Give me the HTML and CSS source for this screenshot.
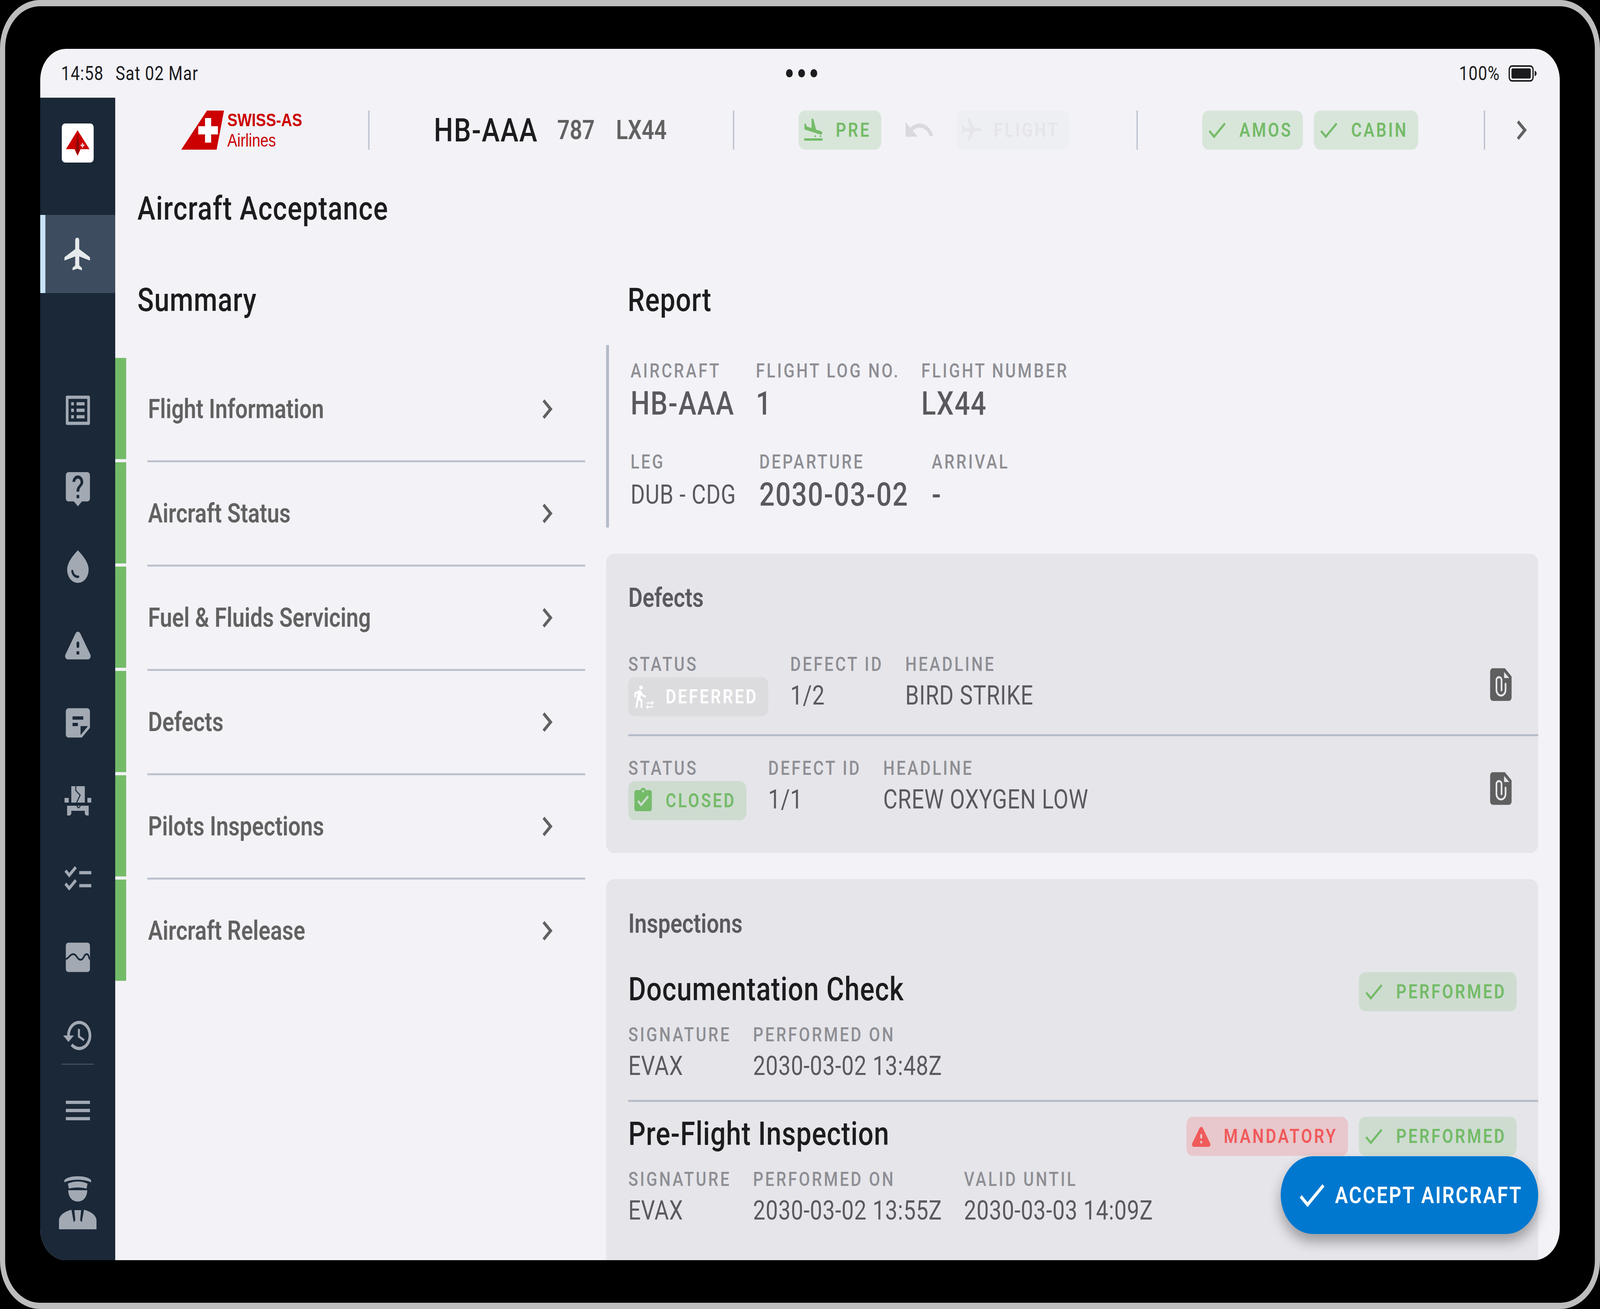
FILE: index.html
```html
<!DOCTYPE html>
<html lang="en">
<head>
<meta charset="utf-8">
<title>Aircraft Acceptance</title>
<link rel="stylesheet" href="styles.css">
</head>
<body>
<div class="device">
<div class="screen">
  <div class="statusbar">
    <div class="clock"><span class="time">14:58</span><span>Sat 02 Mar</span></div>
    <div class="dots"><i></i><i></i><i></i></div>
    <div class="power"><span>100%</span>
      <svg class="battery" viewBox="0 0 88 42"><rect x="2" y="2" width="74" height="38" rx="9" fill="none" stroke="#1c1c1e" stroke-width="4"/><rect x="9" y="8" width="60" height="26" rx="4" fill="#1c1c1e"/><path d="M81 14c4 1 6 4 6 7s-2 6-6 7z" fill="#1c1c1e"/></svg>
    </div>
  </div>
  <div class="app">
    <nav class="sidebar">
      <div class="tile"><svg viewBox="0 0 100 100"><path d="M49.500 17 87 66H59l-9.500 17L40 66H13z" fill="#cc0000"/><path d="M49.500 24 54 50v21l-4.500 10-4.500-10V50z" fill="#8c0a0a"/><path d="M63 50h4v4h4v4h-4v4h-4v-4h-4v-4h4z" fill="#f3c9c9"/></svg></div>
      <div class="nav-active"><svg class="ico plane" viewBox="0 0 24 24"><path d="M21 16v-2l-8-5V3.500c0-.83-.67-1.500-1.500-1.500S10 2.670 10 3.500V9l-8 5v2l8-2.500V19l-2 1.500V22l3.500-1 3.500 1v-1.500L13 19v-5.500l8 2.500z"/></svg></div>
      <div class="nav-list">
        <svg class="ico" viewBox="0 0 24 24"><path d="M19 5v14H5V5h14m1.100-2H3.900c-.5 0-.9.4-.9.9v16.200c0 .4.4.9.9.9h16.200c.4 0 .9-.5.9-.9V3.900c0-.5-.5-.9-.9-.9zM11 7h6v2h-6V7zm0 4h6v2h-6v-2zm0 4h6v2h-6zM7 7h2v2H7zm0 4h2v2H7zm0 4h2v2H7z"/></svg>
        <svg class="ico" viewBox="0 0 24 24"><path d="M19 2H5c-1.110 0-2 .9-2 2v14c0 1.100.89 2 2 2h4l3 3 3-3h4c1.100 0 2-.9 2-2V4c0-1.100-.9-2-2-2zm-6 16h-2v-2h2v2zm2.070-7.750l-.9.92C13.450 11.900 13 12.500 13 14h-2v-.5c0-1.100.45-2.100 1.170-2.830l1.240-1.260c.37-.36.59-.86.59-1.410 0-1.100-.9-2-2-2s-2 .9-2 2H8c0-2.210 1.790-4 4-4s4 1.790 4 4c0 .88-.36 1.680-.93 2.250z"/></svg>
        <svg class="ico" viewBox="0 0 24 24"><path d="M12 2c-5.330 4.550-8 8.480-8 11.800 0 4.980 3.800 8.200 8 8.200s8-3.220 8-8.200c0-3.320-2.670-7.250-8-11.800zM7.830 14c.37 0 .67.26.74.62.41 2.220 2.280 2.980 3.640 2.870.43-.02.79.32.79.75 0 .4-.32.73-.72.75-2.130.13-4.620-1.090-5.190-4.120-.08-.45.28-.87.74-.87z"/></svg>
        <svg class="ico" viewBox="0 0 24 24"><path d="M4.470 21h15.060c1.540 0 2.500-1.670 1.730-3L13.730 4.990c-.77-1.330-2.690-1.330-3.460 0L2.740 18c-.77 1.330.19 3 1.730 3zM12 14c-.55 0-1-.45-1-1v-2c0-.55.45-1 1-1s1 .45 1 1v2c0 .55-.45 1-1 1zm1 4h-2v-2h2v2z"/></svg>
        <svg class="ico" viewBox="0 0 24 24"><path d="M19 3H4.990C3.890 3 3 3.900 3 5l.01 14c0 1.100.89 2 1.990 2h10l6-6V5c0-1.100-.9-2-2-2zM8 8h8v2H8V8zm4 6H8v-2h4v2zm2 5.500V14h5.500L14 19.500z"/></svg>
        <svg class="ico" viewBox="0 0 100 100"><path d="M29.500 12h42v42h-42zM8.500 42h13v12h-13zM79.500 42h12v12h-12zM16.500 62h67v25h-8l-4-4V75h-42v8l-4 4h-9z"/><path d="M43.500 12v11L57 35 46 54M46 62l6 6M58 62l-6 6" fill="none" stroke="#1a2838" stroke-width="3"/></svg>
        <svg class="ico" viewBox="0 0 24 24"><path d="M22 7h-9v2h9V7zm0 8h-9v2h9v-2zM5.540 11L2 7.460l1.410-1.410 2.120 2.120 4.240-4.240 1.410 1.410L5.540 11zm0 8L2 15.460l1.410-1.410 2.120 2.120 4.240-4.240 1.410 1.410L5.540 19z"/></svg>
        <svg class="ico" viewBox="0 0 24 24"><rect x="3" y="3" width="18" height="18" rx="1.800"/><path d="M3 13C5 13 6 10 8.500 10S11.500 13.500 14 13.500 16.500 10 18.500 10 20 13 21 13" fill="none" stroke="#1a2838" stroke-width="1.100"/></svg>
        <svg class="ico" viewBox="0 0 24 24"><path d="M13 3c-4.970 0-9 4.030-9 9H1l3.890 3.890.07.14L9 12H6c0-3.870 3.130-7 7-7s7 3.130 7 7-3.130 7-7 7c-1.930 0-3.680-.79-4.940-2.060l-1.420 1.420C8.270 19.990 10.510 21 13 21c4.970 0 9-4.030 9-9s-4.030-9-9-9zm-1 5v5l4.280 2.540.72-1.210-3.500-2.080V8H12z"/></svg>
      </div>
      <div class="nav-rule"></div>
      <svg class="ico menu" viewBox="0 0 24 24"><path d="M3 18h18v-2H3v2zm0-5h18v-2H3v2zm0-7v2h18V6H3z"/></svg>
      <svg class="ico pilot" viewBox="0 0 117 141"><path d="M17 15C30 2 87 2 100 15v6C80 12 37 12 17 21z"/><path d="M28 24c20-7 41-7 61 0l-3 13c-17-4-38-4-55 0z"/><path d="M29 41h59c0 17-12 29-29.500 29S29 58 29 41z"/><path d="M0 141v-21c0-16 20-25 39-29l7 32 5-5-3-26h21l-3 26 5 5 7-32c19 4 39 13 39 29v21z"/></svg>
    </nav>
    <main class="main">
      <header class="topbar">
        <div class="seg seg-logo">
          <div class="logo">
            <svg class="tail" viewBox="0 0 133 100"><path d="M80 0h53l-23 100H0z" fill="#cc0000"/><path d="M74 19h19v21h21v21H93v21H74V61H53V40h21z" fill="#fff"/></svg>
            <div class="wordmark"><b>SWISS-AS</b><span>Airlines</span></div>
          </div>
        </div>
        <div class="seg seg-flight">
          <span class="tail-no">HB-AAA</span><span class="sub sub-a">787</span><span class="sub sub-b">LX44</span>
        </div>
        <div class="seg seg-phase">
          <div class="chip ok"><svg class="chip-ico" viewBox="0 0 24 24"><path d="M2.500 19h19v2h-19v-2zm7.180-5.730l4.350 1.160 5.310 1.420c.8.21 1.620-.26 1.840-1.060.21-.8-.26-1.620-1.060-1.840l-5.310-1.420-2.760-9.020L10.120 2v8.280L5.150 8.950l-.93-2.320-1.450-.39v5.170l1.600.43 5.310 1.430z"/><circle cx="14" cy="17.200" r=".8"/><circle cx="19.400" cy="17.200" r=".8"/></svg><span>PRE</span></div>
          <svg class="ico undo" viewBox="0 0 24 24"><path d="M12.500 8c-2.650 0-5.050.99-6.900 2.600L2 7v9h9l-3.620-3.620c1.390-1.160 3.160-1.880 5.120-1.880 3.540 0 6.550 2.310 7.600 5.500l2.370-.78C21.080 11.030 17.150 8 12.500 8z"/></svg>
          <div class="chip off"><svg class="chip-ico" viewBox="0 0 24 24"><path transform="rotate(90 12 12)" d="M21 16v-2l-8-5V3.500c0-.83-.67-1.500-1.500-1.500S10 2.670 10 3.500V9l-8 5v2l8-2.500V19l-2 1.500V22l3.500-1 3.500 1v-1.500L13 19v-5.500l8 2.500z"/></svg><span>FLIGHT</span></div>
        </div>
        <div class="seg seg-checks">
          <div class="chip ok"><svg class="chip-ico" viewBox="0 0 24 24"><path d="M9 16.170L4.830 12l-1.420 1.410L9 19 21 7l-1.410-1.410z"/></svg><span>AMOS</span></div>
          <div class="chip ok"><svg class="chip-ico" viewBox="0 0 24 24"><path d="M9 16.170L4.830 12l-1.420 1.410L9 19 21 7l-1.410-1.410z"/></svg><span>CABIN</span></div>
        </div>
        <div class="seg seg-more"><svg class="ico chev" viewBox="0 0 24 24"><path d="M10 6L8.590 7.410 13.170 12l-4.580 4.590L10 18l6-6z"/></svg></div>
      </header>

      <h1 class="title">Aircraft Acceptance</h1>

      <div class="columns">
        <section class="col-left">
          <h2 class="col-head">Summary</h2>
          <ul class="steps">
            <li class="step"><span class="bar"></span><div class="step-body"><span>Flight Information</span><svg class="ico chev" viewBox="0 0 24 24"><path d="M10 6L8.590 7.410 13.170 12l-4.580 4.590L10 18l6-6z"/></svg></div></li>
            <li class="step"><span class="bar"></span><div class="step-body"><span>Aircraft Status</span><svg class="ico chev" viewBox="0 0 24 24"><path d="M10 6L8.590 7.410 13.170 12l-4.580 4.590L10 18l6-6z"/></svg></div></li>
            <li class="step"><span class="bar"></span><div class="step-body"><span>Fuel &amp; Fluids Servicing</span><svg class="ico chev" viewBox="0 0 24 24"><path d="M10 6L8.590 7.410 13.170 12l-4.580 4.590L10 18l6-6z"/></svg></div></li>
            <li class="step"><span class="bar"></span><div class="step-body"><span>Defects</span><svg class="ico chev" viewBox="0 0 24 24"><path d="M10 6L8.590 7.410 13.170 12l-4.580 4.590L10 18l6-6z"/></svg></div></li>
            <li class="step"><span class="bar"></span><div class="step-body"><span>Pilots Inspections</span><svg class="ico chev" viewBox="0 0 24 24"><path d="M10 6L8.590 7.410 13.170 12l-4.580 4.590L10 18l6-6z"/></svg></div></li>
            <li class="step last"><span class="bar"></span><div class="step-body"><span>Aircraft Release</span><svg class="ico chev" viewBox="0 0 24 24"><path d="M10 6L8.590 7.410 13.170 12l-4.580 4.590L10 18l6-6z"/></svg></div></li>
          </ul>
        </section>

        <section class="col-right">
          <h2 class="col-head report-head">Report</h2>
          <div class="report">
            <div class="fields">
              <div class="field"><span class="label">AIRCRAFT</span><span class="big">HB-AAA</span></div>
              <div class="field"><span class="label">FLIGHT LOG NO.</span><span class="big">1</span></div>
              <div class="field"><span class="label">FLIGHT NUMBER</span><span class="big">LX44</span></div>
            </div>
            <div class="fields fields-leg">
              <div class="field"><span class="label">LEG</span><span class="reg">DUB - CDG</span></div>
              <div class="field"><span class="label">DEPARTURE</span><span class="big">2030-03-02</span></div>
              <div class="field"><span class="label">ARRIVAL</span><span class="big">-</span></div>
            </div>
          </div>

          <div class="card defects">
            <h3 class="card-title">Defects</h3>
            <div class="defect rule">
              <div class="cell"><span class="label">STATUS</span>
                <div class="chip muted"><svg class="chip-ico" viewBox="0 0 24 24"><g transform="translate(-2.300 1) scale(.9)"><path d="M13.500 5.500c1.100 0 2-.9 2-2s-.9-2-2-2-2 .9-2 2 .9 2 2 2zM9.800 8.900L7 23h2.100l1.800-8 2.100 2v6h2v-7.500l-2.100-2 .6-3C14.800 12 16.800 13 19 13v-2c-1.900 0-3.500-1-4.300-2.400l-1-1.600c-.4-.6-1-1-1.700-1-.3 0-.5.1-.8.1L6 8.300V13h2V9.600l1.800-.7"/></g><path d="M15.500 17.300h7M20.800 15.700l1.700 1.600-1.700 1.600M22.500 20.700h-7M17.200 19.100l-1.700 1.600 1.700 1.600" fill="none" stroke="currentColor" stroke-width=".9"/></svg><span>DEFERRED</span></div>
              </div>
              <div class="cell"><span class="label">DEFECT ID</span><span class="reg">1/2</span></div>
              <div class="cell"><span class="label">HEADLINE</span><span class="reg">BIRD STRIKE</span></div>
              <svg class="ico clip" viewBox="0 0 24 24"><path d="M6 2h9l5 5v13a2 2 0 0 1-2 2H6a2 2 0 0 1-2-2V4a2 2 0 0 1 2-2z"/><path d="M14.400 4.200V8h3.800z" fill="#e5e5ea"/><path d="M15.500 11.500v3.800a3.400 3.400 0 0 1-6.800 0V9.300a1.900 1.900 0 0 1 3.800 0v6.200" fill="none" stroke="#e5e5ea" stroke-width="1.250" stroke-linecap="round"/></svg>
            </div>
            <div class="defect">
              <div class="cell"><span class="label">STATUS</span>
                <div class="chip ok"><svg class="chip-ico" viewBox="0 0 24 24"><path d="M19 3h-4.180C14.400 1.840 13.300 1 12 1c-1.300 0-2.400.84-2.820 2H5c-1.100 0-2 .9-2 2v14c0 1.100.9 2 2 2h14c1.100 0 2-.9 2-2V5c0-1.100-.9-2-2-2zm-7 0c.55 0 1 .45 1 1s-.45 1-1 1-1-.45-1-1 .45-1 1-1zm-2 14l-4-4 1.410-1.410L10 14.170l6.590-6.590L18 9l-8 8z"/></svg><span>CLOSED</span></div>
              </div>
              <div class="cell"><span class="label">DEFECT ID</span><span class="reg">1/1</span></div>
              <div class="cell"><span class="label">HEADLINE</span><span class="reg">CREW OXYGEN LOW</span></div>
              <svg class="ico clip" viewBox="0 0 24 24"><path d="M6 2h9l5 5v13a2 2 0 0 1-2 2H6a2 2 0 0 1-2-2V4a2 2 0 0 1 2-2z"/><path d="M14.400 4.200V8h3.800z" fill="#e5e5ea"/><path d="M15.500 11.500v3.800a3.400 3.400 0 0 1-6.800 0V9.300a1.900 1.900 0 0 1 3.800 0v6.200" fill="none" stroke="#e5e5ea" stroke-width="1.250" stroke-linecap="round"/></svg>
            </div>
          </div>

          <div class="card inspections">
            <h3 class="card-title">Inspections</h3>
            <div class="inspection rule">
              <div class="ins-head"><span class="ins-name">Documentation Check</span>
                <div class="chip ok"><svg class="chip-ico" viewBox="0 0 24 24"><path d="M9 16.170L4.830 12l-1.420 1.410L9 19 21 7l-1.410-1.410z"/></svg><span>PERFORMED</span></div>
              </div>
              <div class="ins-fields">
                <div class="cell"><span class="label">SIGNATURE</span><span class="reg">EVAX</span></div>
                <div class="cell"><span class="label">PERFORMED ON</span><span class="reg">2030-03-02 13:48Z</span></div>
              </div>
            </div>
            <div class="inspection">
              <div class="ins-head"><span class="ins-name">Pre-Flight Inspection</span>
                <div class="chip alert"><svg class="chip-ico" viewBox="0 0 24 24"><path d="M4.470 21h15.060c1.540 0 2.500-1.670 1.730-3L13.730 4.990c-.77-1.330-2.690-1.330-3.460 0L2.740 18c-.77 1.330.19 3 1.730 3zM12 14c-.55 0-1-.45-1-1v-2c0-.55.45-1 1-1s1 .45 1 1v2c0 .55-.45 1-1 1zm1 4h-2v-2h2v2z"/></svg><span>MANDATORY</span></div>
                <div class="chip ok"><svg class="chip-ico" viewBox="0 0 24 24"><path d="M9 16.170L4.830 12l-1.420 1.410L9 19 21 7l-1.410-1.410z"/></svg><span>PERFORMED</span></div>
              </div>
              <div class="ins-fields">
                <div class="cell"><span class="label">SIGNATURE</span><span class="reg">EVAX</span></div>
                <div class="cell"><span class="label">PERFORMED ON</span><span class="reg">2030-03-02 13:55Z</span></div>
                <div class="cell"><span class="label">VALID UNTIL</span><span class="reg">2030-03-03 14:09Z</span></div>
              </div>
            </div>
          </div>
        </section>
      </div>
    </main>
  </div>
  <button class="fab"><svg viewBox="0 0 24 24"><path d="M9 16.170L4.830 12l-1.420 1.410L9 19 21 7l-1.410-1.410z"/></svg><span>ACCEPT AIRCRAFT</span></button>
</div>
</div>
<script src="fit.js"></script>
</body>
</html>
```
FILE: styles.css
```css
* { box-sizing: border-box; }
html, body { margin: 0; padding: 0; background: #000; }
html { width: 100%; height: 100%; overflow: hidden; }
body { width: 100%; height: 3350px; overflow: hidden; font-family: Roboto, "Noto Sans", sans-serif; }
h1, h2, h3, ul { margin: 0; padding: 0; font-weight: 500; list-style: none; }

.device { width: 4971px; height: 3350px; background: #000; border: 16px solid #bdbdbd; border-radius: 124px; padding: 109px; transform: scaleX(var(--fit, 1)); transform-origin: 0 0; }
.screen { position: relative; width: 4721px; height: 3100px; background: #f2f2f7; border-radius: 80px; overflow: hidden; display: flex; flex-direction: column; }

/* status bar */
.statusbar { flex: 0 0 125px; display: flex; align-items: center; padding: 0 71px 0 65px; color: #1c1c1e; font-size: 50px; letter-spacing: 1.500px; }
.clock { flex: 0 0 2252px; display: flex; gap: 37px; }
.dots { display: flex; gap: 17px; }
.dots i { width: 21px; height: 21px; border-radius: 50%; background: #1c1c1e; }
.power { margin-left: auto; display: flex; align-items: center; gap: 27px; }
.battery { width: 88px; height: 42px; }

.app { flex: 1; display: flex; min-height: 0; }

/* sidebar */
.sidebar { flex: 0 0 233px; background: #1a2838; display: flex; flex-direction: column; align-items: center; }
.ico { width: 100px; height: 100px; flex: none; fill: #a2a9b3; display: block; }
.tile { width: 99px; height: 100px; margin-top: 66px; background: #fff; border-radius: 10px; flex: none; }
.tile svg { width: 100%; height: 100%; display: block; }
.nav-active { width: 100%; height: 200px; margin-top: 134px; background: #3d4d5f; border-left: 16px solid #c8e2fb; display: flex; align-items: center; justify-content: center; padding-right: 16px; flex: none; }
.nav-active .plane { fill: #e6e9ec; }
.nav-list { margin-top: 250px; display: flex; flex-direction: column; gap: 100px; flex: none; }
.nav-rule { width: 100px; height: 3px; margin-top: 22px; background: #3d4f63; flex: none; }
.menu { margin-top: 67px; }
.pilot { width: 117px; height: 141px; margin-top: 113px; }

/* main */
.main { flex: 1; min-width: 0; display: flex; flex-direction: column; overflow: hidden; }
.topbar { flex: none; display: flex; height: 133px; padding-top: 33px; }
.seg { height: 100px; display: flex; align-items: center; justify-content: center; border-right: 4px solid #bcc1cd; }
.seg-logo { flex: 0 0 790px; }
.seg-flight { flex: 0 0 1133px; justify-content: flex-start; padding-left: 200px; }
.seg-phase { flex: 0 0 1254px; gap: 67px; padding-right: 8px; }
.seg-checks { flex: 0 0 1079px; gap: 34px; padding-right: 4px; }
.seg-more { flex: 1; border-right: 0; padding-right: 6px; }

.logo { display: flex; align-items: center; gap: 10px; }
.tail { width: 133px; height: 100px; display: block; }
.wordmark { display: flex; flex-direction: column; font-family: "Liberation Sans", Arial, sans-serif; color: #cc0000; line-height: 52px; }
.wordmark b { font-size: 47px; font-weight: 700; }
.wordmark span { font-size: 46px; }

.tail-no { font-size: 84px; font-weight: 500; color: #1c1c1e; letter-spacing: 2.500px; }
.sub { font-size: 68px; font-weight: 600; color: #616161; }
.sub-a { margin-left: 60px; }
.sub-b { margin-left: 66px; }
.undo { fill: #d9d9de; }
.chev { fill: #616161; }

/* chips */
.chip { display: inline-flex; align-items: center; height: 100px; padding: 0 32px 0 10px; gap: 34px; border-radius: 20px; font-size: 50px; font-weight: 600; letter-spacing: 5.800px; white-space: nowrap; flex: none; }
.chip-ico { width: 72px; height: 72px; flex: none; fill: currentColor; display: block; }
.chip.ok { background: rgba(116, 187, 104, .2); color: #74bb68; }
.chip.off { background: #eeeff3; color: #e5e5ea; }
.chip.muted { background: #dcdcdf; color: #fff; }
.chip.alert { background: rgba(245, 85, 85, .2); color: #f05a5b; }

/* title + columns */
.title { margin: 101px 0 0 69px; font-size: 84px; line-height: 100px; color: #1c1c1e; letter-spacing: 1.750px; flex: none; }
.columns { flex: 1; min-height: 0; margin-top: 134px; display: flex; gap: 65px; }
.col-left { flex: 0 0 1460px; }
.col-right { flex: 0 0 2896px; }
.col-head { font-size: 84px; line-height: 100px; color: #1c1c1e; padding-left: 69px; letter-spacing: 1.400px; }
.report-head { padding-left: 67px; }

.steps { margin-top: 98px; }
.step { display: flex; height: 267px; }
.bar { flex: 0 0 34px; height: 259px; background: #74bb68; }
.step-body { flex: 1; margin-left: 66px; padding: 0 68px 0 2px; border-bottom: 5px solid #bcc1cd; display: flex; align-items: center; justify-content: space-between; font-size: 68px; font-weight: 600; color: #616161; }
.step.last .step-body { border-bottom: 0; padding-bottom: 5px; }

/* report */
.report { margin-top: 65px; height: 467px; border-left: 9px solid #b4bbc8; padding: 36px 0 0 67px; display: flex; flex-direction: column; gap: 77px; }
.fields { display: flex; gap: 66px; }
.fields-leg { gap: 72px; }
.field { display: flex; flex-direction: column; gap: 12px; }
.label { display: block; font-size: 50px; line-height: 60px; font-weight: 500; letter-spacing: 5.800px; color: #8e8e93; white-space: nowrap; }
.big { font-size: 84px; line-height: 84px; font-weight: 500; color: #5a5a5e; letter-spacing: 2.500px; white-space: nowrap; }
.reg { display: block; font-size: 68px; line-height: 100px; color: #5a5a5e; letter-spacing: 1px; white-space: nowrap; }
.field .reg { line-height: 84px; }

/* cards */
.card { background: #e5e5ea; border-radius: 24px; }
.card-title { padding-left: 69px; font-size: 68px; line-height: 90px; font-weight: 600; color: #5a5a5e; }
.defects { margin-top: 67px; padding: 68px 0 38px; }
.defects .card-title { margin-bottom: 43px; }
.defect { margin-left: 69px; padding: 52px 66px 46px 0; display: flex; align-items: flex-start; gap: 68px; }
.defect.rule { border-bottom: 5px solid #b4bbc8; }
.cell .chip { margin-top: 3px; }
.clip { margin-left: auto; align-self: center; fill: #5f5f60; }

.inspections { margin-top: 67px; padding: 69px 0 120px; }
.inspection { margin-left: 69px; padding: 32px 67px 37px 0; }
.inspection.rule { border-bottom: 5px solid #b4bbc8; }
.inspections .card-title { margin-bottom: 41px; }
.ins-head { display: flex; gap: 34px; height: 100px; }
.ins-head .chip { margin-top: 6px; }
.ins-head .ins-name + .chip { margin-left: auto; }
.ins-name { font-size: 84px; line-height: 100px; font-weight: 500; color: #1c1c1e; letter-spacing: 1.400px; white-space: nowrap; }
.ins-fields { margin-top: 36px; display: flex; gap: 68px; }

/* floating action */
.fab { position: absolute; right: 67px; bottom: 67px; height: 199px; border: 0; border-radius: 100px; background: #0078cf; color: #fff; display: flex; align-items: center; gap: 20px; padding: 0 49px 0 44px; font-family: Roboto, sans-serif; font-size: 60px; font-weight: 600; letter-spacing: 3.900px; box-shadow: 0 20px 36px rgba(0, 0, 0, .32); }
.fab svg { width: 105px; height: 105px; fill: #fff; display: block; }
```
FILE: fit.js
```js
// The window may be narrower than the 4971px design: fit the device frame to its width.
var fit = Math.min(1, window.innerWidth / 4971);
document.documentElement.style.setProperty('--fit', fit);
```
